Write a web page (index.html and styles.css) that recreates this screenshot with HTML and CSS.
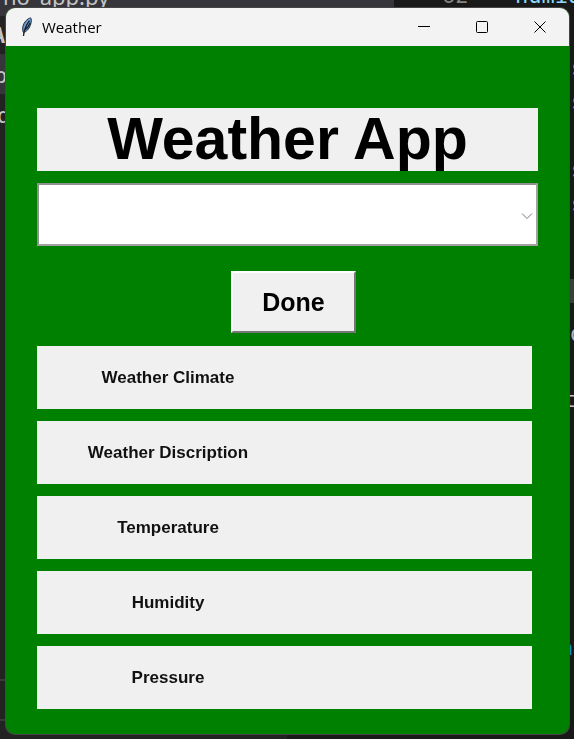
FILE: index.html
```html
<!DOCTYPE html>
<html lang="en">
<head>
<meta charset="utf-8">
<title>Weather</title>
<link rel="stylesheet" href="styles.css">
</head>
<body>
<div class="editor" aria-hidden="true">
  <div class="tab"></div>
  <div class="strip"></div>
  <span class="code file-name">no_app.py</span>
  <span class="code line-number">62</span>
  <span class="code variable">humidity</span>
  <span class="code left-a">A</span>
  <span class="code left-p">p</span>
  <span class="code left-d">d</span>
  <span class="code self s1">s</span>
  <span class="code self s2">s</span>
  <span class="code self s3">s</span>
  <span class="code self s4">s</span>
  <div class="mark"></div>
  <span class="code right-o">o</span>
  <span class="code right-t">t</span>
  <span class="code right-a">a</span>
  <div class="rule r1"></div>
  <div class="rule r2"></div>
</div>
<main class="window">
  <header class="titlebar">
    <svg class="feather" width="14" height="20" viewBox="0 0 14 20" aria-hidden="true">
      <path d="M10.5 .8C7 2 4 5 3 9c-.6 2.500-.5 5 .5 6.500 3-.8 5.500-3.500 6.800-7C11.500 5 11.800 2 10.500.8Z" fill="#5c94ce" stroke="#263343" stroke-width="1"/>
      <path d="M10.500 1C7 4 5 8 4 12l4-5Z" fill="#b4d1ed"/>
      <path d="M9.500 3.500C6 8 4 13 3.500 19M4.500 13l3.500-3M8 10l2-4" fill="none" stroke="#19202a" stroke-width="1.300"/>
    </svg>
    <span class="caption">Weather</span>
    <button class="control" type="button" aria-label="Minimize"><svg width="12" height="12" viewBox="0 0 12 12"><path d="M0 5.500h12"/></svg></button>
    <button class="control" type="button" aria-label="Maximize"><svg width="12" height="12" viewBox="0 0 12 12"><rect x=".5" y=".5" width="11" height="11" rx="1"/></svg></button>
    <button class="control" type="button" aria-label="Close"><svg width="12" height="12" viewBox="0 0 12 12"><path d="M.5.5l11 11M11.500.5l-11 11"/></svg></button>
  </header>
  <div class="content">
    <h1 class="heading">Weather App</h1>
    <div class="combo">
      <select class="city" aria-label="City"><option></option></select>
      <svg class="arrow" width="12" height="8" viewBox="0 0 12 8" aria-hidden="true"><path d="M1 1.500l5 5 5-5"/></svg>
    </div>
    <button class="done" type="button">Done</button>
    <div class="fields">
      <div class="field"><span class="label">Weather Climate</span></div>
      <div class="field"><span class="label">Weather Discription</span></div>
      <div class="field"><span class="label">Temperature</span></div>
      <div class="field"><span class="label">Humidity</span></div>
      <div class="field"><span class="label">Pressure</span></div>
    </div>
  </div>
</main>
</body>
</html>
```
FILE: styles.css
```css
* { box-sizing: border-box; }

body {
  margin: 0;
  background: #1e1e1f;
  font-family: "Liberation Sans", Arial, sans-serif;
}

/* Code editor seen behind the window */
.editor {
  position: fixed;
  inset: 0;
  overflow: hidden;
  background: linear-gradient(to right, #222223 50%, #19191a 50%);
}
.tab {
  position: absolute;
  left: 0;
  top: 0;
  width: 394px;
  height: 16px;
  background: #35353b;
}
.strip {
  position: absolute;
  left: 0;
  top: 54px;
  width: 8px;
  height: 40px;
  background: #35353b;
}
.code {
  position: absolute;
  font: 22px/24px "DejaVu Sans Mono", monospace;
  color: #c4c4c4;
}
.file-name { left: 3px; top: -16px; font-family: "Noto Sans", sans-serif; }
.line-number { left: 442px; top: -16px; color: #858585; }
.variable { left: 515px; top: -16px; color: #8fd8fa; }
.left-a { left: -8px; top: 24px; font-weight: bold; }
.left-p { left: -6px; top: 64px; }
.left-d { left: -3px; top: 104px; }
.self { left: 571px; color: #4fa5f5; }
.s1 { top: 56px; }
.s2 { top: 90px; }
.s3 { top: 158px; }
.s4 { top: 192px; }
.mark {
  position: absolute;
  right: 0;
  top: 279px;
  width: 5px;
  height: 24px;
  background: #3c3c3d;
  border-top: 3px solid #3c3c3d;
}
.right-o { left: 570px; top: 322px; color: #b5b5b5; }
.right-t { left: 563px; top: 388px; }
.right-a { left: 560px; top: 636px; color: #138ab5; }
.rule {
  position: absolute;
  left: 0;
  width: 8px;
  height: 2px;
  background: #3a3a3a;
}
.r1 { top: 679px; }
.r2 { top: 719px; }

/* Application window */
.window {
  position: relative;
  display: flex;
  flex-direction: column;
  min-height: calc(100vh - 13px);
  margin: 8px 5px 5px 6px;
  overflow: hidden;
  background: #008000;
  border-radius: 9px;
  box-shadow: 0 0 0 1px #454545;
}
.titlebar {
  display: flex;
  align-items: center;
  height: 38px;
  padding-left: 14px;
  background: #f3f3f3;
}
.caption {
  flex: 1;
  padding-left: 8px;
  font: 15px/20px "Open Sans", "Noto Sans", sans-serif;
  color: #000;
}
.control {
  display: flex;
  align-items: center;
  justify-content: center;
  width: 58px;
  height: 38px;
  padding: 0;
  border: 0;
  background: none;
}
.control svg {
  fill: none;
  stroke: #000;
  stroke-width: 1;
}
.content {
  display: flex;
  flex-direction: column;
  padding: 62px 31px 25px;
}
.heading {
  height: 63px;
  margin: 0 0 12px;
  overflow: hidden;
  background: #f0f0f0;
  color: #000;
  font-size: 59px;
  line-height: 63px;
  text-align: center;
}
.combo {
  position: relative;
  height: 63px;
  margin-bottom: 25px;
}
.city {
  display: block;
  width: 100%;
  height: 100%;
  padding: 0 24px 0 8px;
  border: 2px solid;
  border-color: #919191 #a2a2a2 #a2a2a2 #919191;
  border-radius: 0;
  background: #fff;
  appearance: none;
  font-size: 25px;
}
.arrow {
  position: absolute;
  right: 5px;
  top: 29px;
  fill: none;
  stroke: #777;
  pointer-events: none;
}
.done {
  align-self: center;
  width: 125px;
  height: 62px;
  margin: 0 0 13px 12px;
  padding: 0;
  border: 2px solid;
  border-color: #fff #777 #777 #fff;
  background: #f0f0f0;
  color: #000;
  font: bold 25px/30px "Liberation Sans", Arial, sans-serif;
}
.fields {
  display: grid;
  gap: 12px;
  margin-right: 6px;
}
.field {
  display: flex;
  align-items: center;
  height: 63px;
  background: #f0f0f0;
}
.label {
  width: 262px;
  color: #111;
  font-size: 17px;
  font-weight: bold;
  line-height: 20px;
  text-align: center;
}
```
